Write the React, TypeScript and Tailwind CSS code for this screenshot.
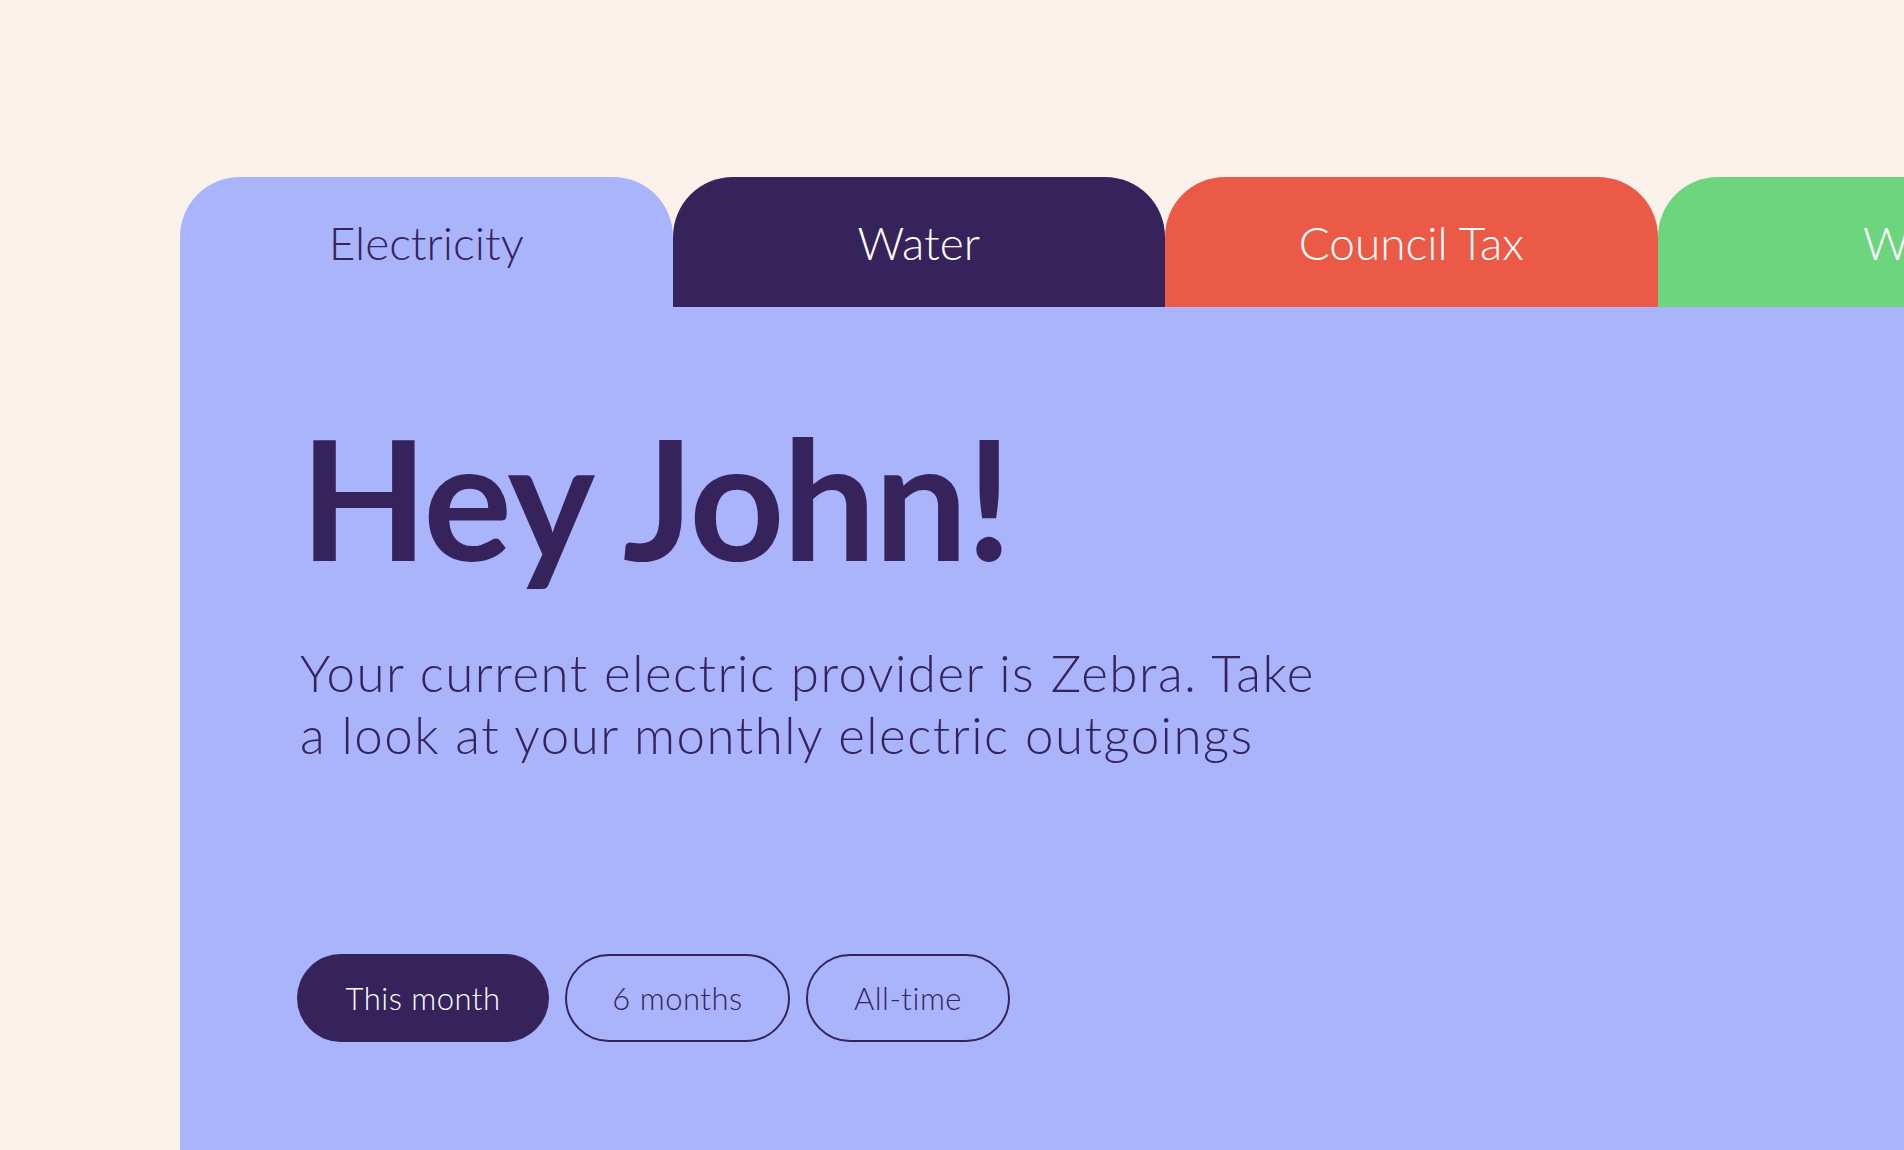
import React from 'react';

// Bill category tabs across the top of the card
const tabs = [
  { label: 'Electricity', className: 'bg-[#aab4fb] text-[#36235c]' },
  { label: 'Water', className: 'bg-[#36235c] text-white' },
  { label: 'Council Tax', className: 'bg-[#eb5a47] text-white' },
  { label: 'Wifi', className: 'bg-[#6dd57e] text-white' },
];

const ranges = [
  { label: 'This month', active: true, width: 'w-[252px]' },
  { label: '6 months', active: false, width: 'w-[225px]' },
  { label: 'All-time', active: false, width: 'w-[204px]' },
];

export default function App() {
  return (
    <div
      className="h-[1150px] w-full overflow-hidden bg-[#f9f1ea] pl-[180px] pt-[177px]"
      style={{ fontFamily: 'Lato, "Open Sans", sans-serif' }}
    >
      <div className="flex h-full w-[2100px] flex-col">
        <div className="flex">
          {tabs.map((tab) => (
            <div
              key={tab.label}
              className={`flex h-[130px] w-[492.5px] shrink-0 items-center justify-center rounded-t-[60px] text-[46px] font-light ${tab.className}`}
            >
              {tab.label}
            </div>
          ))}
        </div>

        <div className="flex-1 bg-[#aab4fb] pl-[117px] pt-[107px] text-[#36235c]">
          <h1 className="pl-[3px] text-[166px] font-bold leading-none tracking-[-2px]">Hey John!</h1>
          <p className="mt-[62px] pl-[3px] text-[51px] font-light leading-[62px] tracking-[1.5px]">
            Your current electric provider is Zebra. Take
            <br />
            a look at your monthly electric outgoings
          </p>

          <div className="mt-[188px] flex gap-[16px]">
            {ranges.map((range) => (
              <button
                key={range.label}
                className={`flex h-[88px] items-center justify-center rounded-full text-[31px] font-light tracking-[0.5px] ${range.width} ${
                  range.active
                    ? 'bg-[#36235c] text-white'
                    : 'border-2 border-[#36235c] text-[#36235c]'
                }`}
              >
                {range.label}
              </button>
            ))}
          </div>
        </div>
      </div>
    </div>
  );
}
